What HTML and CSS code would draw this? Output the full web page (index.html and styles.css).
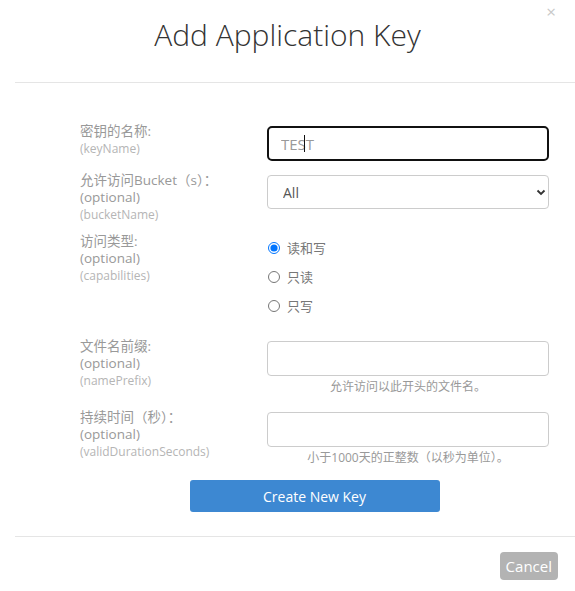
FILE: index.html
```html
<!DOCTYPE html>
<html lang="zh-CN">
<head>
    <meta charset="UTF-8">
    <meta name="viewport" content="width=device-width, initial-scale=1.0">
    <title>Add Application Key</title>
    <link rel="stylesheet" href="styles.css">
</head>
<body>
    <div class="modal">
        <div class="modal-header">
            <button class="close" type="button">&times;</button>
            <h1>Add Application Key</h1>
        </div>

        <form class="key-form">
            <div class="form-row row-name">
                <label class="field-label">
                    <span class="label-main">密钥的名称:</span>
                    <span class="label-sub">(keyName)</span>
                </label>
                <div class="field-control">
                    <div class="input-wrap">
                        <input type="text" class="text-input focused" value="TEST">
                        <span class="caret"></span>
                    </div>
                </div>
            </div>

            <div class="form-row row-bucket">
                <label class="field-label">
                    <span class="label-main">允许访问Bucket（s）：</span>
                    <span class="label-opt">(optional)</span>
                    <span class="label-sub">(bucketName)</span>
                </label>
                <div class="field-control">
                    <div class="select-wrap">
                        <select class="select-input">
                            <option>All</option>
                        </select>
                        <svg class="chevron" width="10" height="7" viewBox="0 0 10 7">
                            <path d="M1.5 1.5 L5 5 L8.5 1.5" fill="none" stroke="#333" stroke-width="1.8"/>
                        </svg>
                    </div>
                </div>
            </div>

            <div class="form-row row-caps">
                <label class="field-label">
                    <span class="label-main">访问类型:</span>
                    <span class="label-opt">(optional)</span>
                    <span class="label-sub">(capabilities)</span>
                </label>
                <div class="field-control radios">
                    <label class="radio"><input type="radio" name="caps" checked> 读和写</label>
                    <label class="radio"><input type="radio" name="caps"> 只读</label>
                    <label class="radio"><input type="radio" name="caps"> 只写</label>
                </div>
            </div>

            <div class="form-row row-prefix">
                <label class="field-label">
                    <span class="label-main">文件名前缀:</span>
                    <span class="label-opt">(optional)</span>
                    <span class="label-sub">(namePrefix)</span>
                </label>
                <div class="field-control">
                    <input type="text" class="text-input">
                    <p class="help">允许访问以此开头的文件名。</p>
                </div>
            </div>

            <div class="form-row row-duration">
                <label class="field-label">
                    <span class="label-main">持续时间（秒）：</span>
                    <span class="label-opt">(optional)</span>
                    <span class="label-sub">(validDurationSeconds)</span>
                </label>
                <div class="field-control">
                    <input type="text" class="text-input">
                    <p class="help">小于1000天的正整数（以秒为单位）。</p>
                </div>
            </div>

            <div class="submit-row">
                <button type="button" class="btn-primary">Create New Key</button>
            </div>
        </form>

        <div class="modal-footer">
            <button type="button" class="btn-cancel">Cancel</button>
        </div>
    </div>
</body>
</html>
```

FILE: styles.css
```css
body {
    margin: 0;
    background: #fff;
    font-family: "Open Sans", "Noto Sans CJK SC", sans-serif;
    color: #999;
}

.modal {
    width: 575px;
}

/* header */
.modal-header {
    position: relative;
    margin-left: 15px;
    padding: 13px 15px 0 0;
    height: 69px;
    border-bottom: 1px solid #e5e5e5;
}

.modal-header h1 {
    margin: 0;
    text-align: center;
    font-size: 30px;
    font-weight: 300;
    line-height: 44px;
    color: #333;
}

.close {
    position: absolute;
    top: 2px;
    right: 19px;
    padding: 0;
    border: none;
    background: none;
    font-family: "Open Sans", sans-serif;
    font-size: 17px;
    line-height: 20px;
    color: #c8c8c8;
}

/* form */
.key-form {
    padding: 40px 26px 0 80px;
}

.form-row {
    display: grid;
    grid-template-columns: 187px 282px;
    margin-bottom: 11px;
}

.row-bucket { margin-bottom: 10px; }
.row-caps { margin-bottom: 18px; }
.row-prefix { margin-bottom: 14px; }
.row-duration { margin-bottom: 14px; }

.field-label {
    display: flex;
    flex-direction: column;
    line-height: 17px;
}

.label-main {
    font-size: 13.5px;
    color: #999;
}

.label-opt {
    font-size: 13.5px;
    color: #999;
}

.label-sub {
    font-size: 12px;
    color: #b5b5b5;
}

.field-control {
    padding-top: 3px;
}

.input-wrap,
.select-wrap {
    position: relative;
}

.text-input {
    box-sizing: border-box;
    display: block;
    width: 282px;
    height: 35px;
    padding: 0 12px;
    border: 1px solid #ccc;
    border-radius: 4px;
    font-family: "Open Sans", sans-serif;
    font-size: 15px;
    color: #999;
    outline: none;
}

.text-input.focused {
    border: 2px solid #111;
    border-radius: 5px;
}

.caret {
    position: absolute;
    left: 37px;
    top: 9px;
    width: 1px;
    height: 17px;
    background: #111;
}

.select-input {
    box-sizing: border-box;
    display: block;
    width: 282px;
    height: 34px;
    padding: 0 15px;
    border: 1px solid #ccc;
    border-radius: 4px;
    background: #fff;
    font-family: "Open Sans", sans-serif;
    font-size: 14px;
    color: #555;
    appearance: none;
    outline: none;
}

.chevron {
    position: absolute;
    right: 3px;
    top: 14px;
}

.radios {
    padding-top: 0;
    display: flex;
    flex-direction: column;
}

.radio {
    display: flex;
    align-items: center;
    height: 29px;
    font-size: 13px;
    color: #777;
}

.radio input {
    width: 12px;
    height: 12px;
    margin: 0 7px 0 1px;
}

.help {
    margin: 2px 0 0;
    text-align: center;
    font-size: 12px;
    line-height: 17px;
    color: #999;
}

.submit-row {
    display: flex;
    justify-content: center;
}

.btn-primary {
    width: 250px;
    height: 32px;
    border: none;
    border-radius: 3px;
    background: #3d88d2;
    color: #fff;
    font-family: "Open Sans", sans-serif;
    font-size: 14px;
}

/* footer */
.modal-footer {
    margin: 24px 0 0 15px;
    padding: 15px 17px 0 0;
    border-top: 1px solid #e5e5e5;
    display: flex;
    justify-content: flex-end;
}

.btn-cancel {
    height: 28px;
    padding: 0 6px;
    border: none;
    border-radius: 4px;
    background: #b3b3b3;
    color: #fff;
    font-family: "Open Sans", sans-serif;
    font-size: 15px;
}
```
